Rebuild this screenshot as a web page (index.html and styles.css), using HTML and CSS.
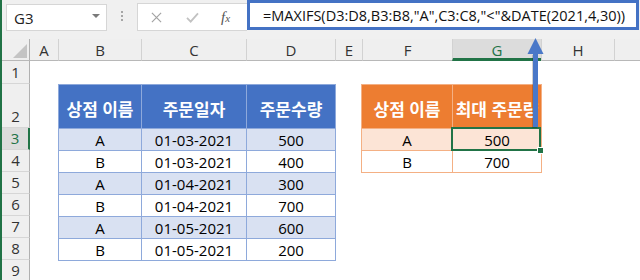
FILE: index.html
```html
<!DOCTYPE html>
<html lang="ko">
<head>
  <meta charset="UTF-8" />
  <title>MAXIFS - 상점별 최대 주문량</title>
  <link rel="stylesheet" href="styles.css">
</head>
<body>
  <div class="app">
    <!-- Строка формул -->
    <div class="formula-bar">
      <div class="name-box">
        <span>G3</span>
        <i class="caret"></i>
      </div>
      <svg class="grip" viewBox="0 0 3 11" aria-hidden="true">
        <rect x="0" y="0" width="2" height="2" />
        <rect x="0" y="4" width="2" height="2" />
        <rect x="0" y="8" width="2" height="2" />
      </svg>
      <div class="fx-tools">
        <svg class="ico-cancel" viewBox="0 0 12 12" aria-hidden="true">
          <path d="M1 1 L11 11 M11 1 L1 11" />
        </svg>
        <svg class="ico-enter" viewBox="0 0 14 12" aria-hidden="true">
          <path d="M1 6.5 L5 10.5 L13 1.5" />
        </svg>
        <span class="fx">f<span class="fx-x">x</span></span>
      </div>
      <div class="formula">=MAXIFS(D3:D8,B3:B8,"A",C3:C8,"&lt;"&amp;DATE(2021,4,30))</div>
    </div>

    <!-- Лист -->
    <div class="sheet">
      <div class="ch corner">
        <svg viewBox="0 0 14 14" aria-hidden="true"><polygon points="14,0 14,14 0,14" /></svg>
      </div>
      <div class="ch ch-first">A</div>
      <div class="ch">B</div>
      <div class="ch">C</div>
      <div class="ch">D</div>
      <div class="ch">E</div>
      <div class="ch">F</div>
      <div class="ch ch-active">G</div>
      <div class="ch">H</div>
      <div class="ch"></div>

      <div class="rh">1</div>
      <div class="rh">2</div>
      <div class="rh rh-active">3</div>
      <div class="rh">4</div>
      <div class="rh">5</div>
      <div class="rh">6</div>
      <div class="rh">7</div>
      <div class="rh">8</div>
      <div class="rh">9</div>

      <div class="tbl tbl-blue">
        <div class="th">상점 이름</div>
        <div class="th">주문일자</div>
        <div class="th">주문수량</div>

        <div class="td">A</div><div class="td">01-03-2021</div><div class="td">500</div>
        <div class="td">B</div><div class="td">01-03-2021</div><div class="td">400</div>
        <div class="td">A</div><div class="td">01-04-2021</div><div class="td">300</div>
        <div class="td">B</div><div class="td">01-04-2021</div><div class="td">700</div>
        <div class="td">A</div><div class="td">01-05-2021</div><div class="td">600</div>
        <div class="td">B</div><div class="td">01-05-2021</div><div class="td">200</div>
      </div>

      <div class="tbl tbl-orange">
        <div class="th">상점 이름</div>
        <div class="th">최대 주문량</div>
        <div class="td">A</div><div class="td selected">500</div>
        <div class="td">B</div><div class="td">700</div>
      </div>
    </div>

    <!-- Стрелка от G3 к формуле -->
    <svg class="arrow" viewBox="0 0 18 92" aria-hidden="true">
      <rect class="arrow-shadow" x="5" y="18" width="5" height="73" />
      <rect x="6" y="15" width="5" height="75" />
      <polygon points="8.5,1 16.5,17 0.5,17" />
    </svg>
  </div>
</body>
</html>
```

FILE: styles.css
```css
html, body {
  margin: 0;
  padding: 0;
  width: 640px;
  height: 280px;
  overflow: hidden;
  background: #fff;
  font-family: "Open Sans", "Noto Sans CJK KR", sans-serif;
}
.app {
  position: relative;
  width: 640px;
  height: 280px;
  box-sizing: border-box;
  border-left: 2px solid #217346;
  overflow: hidden;
}

/* formula bar */
.formula-bar {
  height: 39px;
  background: #f0f0f0;
  display: flex;
  align-items: flex-start;
  padding-left: 4px;
  box-sizing: border-box;
}
.name-box {
  margin-top: 4px;
  width: 101px;
  height: 27px;
  box-sizing: border-box;
  background: #fff;
  border: 1px solid #d6d6d6;
  display: flex;
  align-items: center;
  justify-content: space-between;
  padding: 0 6px 0 7px;
  font-size: 15px;
  color: #222;
}
.caret {
  width: 0;
  height: 0;
  border-left: 4px solid transparent;
  border-right: 4px solid transparent;
  border-top: 4px solid #7a7a7a;
  margin-bottom: 3px;
}
.grip {
  width: 3px;
  height: 11px;
  margin: 11px 0 0 14px;
  fill: #a6a6a6;
}
.fx-tools {
  margin: 3px 0 0 13px;
  width: 110px;
  height: 28px;
  box-sizing: border-box;
  background: #fff;
  border: 1px solid #d6d6d6;
  border-right: none;
  display: flex;
  align-items: center;
  padding-left: 13px;
}
.ico-cancel {
  width: 11px;
  height: 11px;
  fill: none;
  stroke: #a3a3a3;
  stroke-width: 1.3;
}
.ico-enter {
  width: 13px;
  height: 11px;
  margin-left: 24px;
  fill: none;
  stroke: #c2c2c2;
  stroke-width: 2;
}
.fx {
  margin-left: 22px;
  font-family: "Liberation Serif", serif;
  font-style: italic;
  font-size: 15px;
  color: #555;
}
.fx-x {
  font-size: 11px;
}
.formula {
  width: 392px;
  height: 30px;
  box-sizing: border-box;
  background: #fff;
  border: 3px solid #4472c4;
  padding-left: 13px;
  display: flex;
  align-items: center;
  font-size: 14.5px;
  color: #111;
  white-space: nowrap;
  overflow: hidden;
}

/* sheet grid */
.sheet {
  display: grid;
  grid-template-columns: 28px 28px 83px 105px 89px 27px 90px 89px 73px 1fr;
  grid-template-rows: 22px 23px 44px repeat(7, 22px);
  font-size: 15px;
}
.ch {
  background: #efefef;
  border-left: 1px solid #d2d2d2;
  border-bottom: 1px solid #b8b8b8;
  display: flex;
  align-items: center;
  justify-content: center;
  color: #333;
  box-sizing: border-box;
}
.ch-first {
  border-left: none;
}
.corner {
  border-left: none;
  border-right: 1px solid #b0b0b0;
  justify-content: flex-end;
  align-items: flex-end;
}
.corner svg {
  width: 14px;
  height: 14px;
  margin: 0 2px 2px 0;
  fill: #c4c4c4;
}
.ch-active {
  background: #dcdcdc;
  color: #217346;
  border-bottom: 3px solid #217346;
  padding-top: 2px;
}
.rh {
  grid-column: 1;
  background: #efefef;
  border-right: 1px solid #b0b0b0;
  border-bottom: 1px solid #d6d6d6;
  display: flex;
  align-items: flex-end;
  justify-content: center;
  padding-bottom: 1px;
  color: #333;
  box-sizing: border-box;
}
.rh-active {
  background: #dcdcdc;
  color: #217346;
  border-right: 2px solid #217346;
}

/* tables */
.tbl {
  display: grid;
  gap: 1px;
  padding: 1px;
  align-self: start;
  justify-self: start;
}
.tbl > div {
  display: flex;
  align-items: center;
  justify-content: center;
  white-space: nowrap;
  overflow: hidden;
  color: #000;
  font-size: 15px;
}
.tbl .th {
  color: #fff;
  font-weight: 700;
  font-size: 17px;
  padding-top: 4px;
}
.tbl-blue {
  grid-column: 3 / 6;
  grid-row: 3 / 10;
  background: #8ea9db;
  grid-template-columns: 82px 104px 88px;
  grid-template-rows: 43px repeat(6, 21px);
}
.tbl-blue .th {
  background: #4472c4;
}
.tbl-blue .td {
  background: #fff;
}
.tbl-blue .td:nth-child(6n+4),
.tbl-blue .td:nth-child(6n+5),
.tbl-blue .td:nth-child(6n+6) {
  background: #d9e1f2;
}
.tbl-orange {
  grid-column: 7 / 9;
  grid-row: 3 / 6;
  margin-left: -1px;
  background: #f4b084;
  grid-template-columns: 90px 88px;
  grid-template-rows: 43px 21px 21px;
}
.tbl-orange .th {
  background: #ed7d31;
}
.tbl-orange .td {
  background: #fff;
}
.tbl-orange .td:nth-child(3),
.tbl-orange .td:nth-child(4) {
  background: #fce4d6;
}
.tbl .selected {
  position: relative;
  overflow: visible;
}
.selected::after {
  content: "";
  position: absolute;
  top: -2px;
  left: -2px;
  right: 0;
  bottom: -1px;
  border: 2px solid #217346;
}
.selected::before {
  content: "";
  position: absolute;
  right: -3px;
  bottom: -4px;
  width: 5px;
  height: 5px;
  background: #217346;
  border: 1px solid #fff;
  z-index: 1;
}

/* arrow */
.arrow {
  position: absolute;
  left: 525px;
  top: 37px;
  width: 18px;
  height: 92px;
  fill: #4a78c8;
}
.arrow .arrow-shadow {
  fill: rgba(0, 0, 0, 0.18);
}
```
